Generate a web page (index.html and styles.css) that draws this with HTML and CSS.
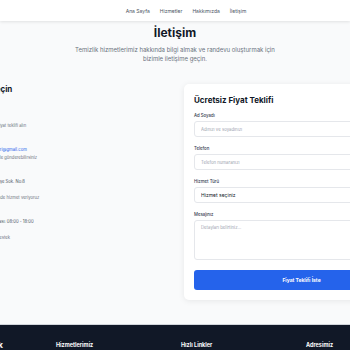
FILE: index.html
```html
<!DOCTYPE html>
<html lang="tr">
<head>
  <meta charset="UTF-8">
  <title>İletişim - Parlak Temizlik</title>
  <link rel="stylesheet" href="styles.css">
</head>
<body>
  <header class="site-header">
    <div class="wrap">
      <div class="header-inner">
        <a class="logo" href="#">Parlak Temizlik</a>
        <nav class="nav">
          <a href="#">Ana Sayfa</a>
          <a href="#">Hizmetler</a>
          <a href="#">Hakkımızda</a>
          <a href="#">İletişim</a>
        </nav>
        <a class="header-cta" href="#">Hemen Ara</a>
      </div>
    </div>
  </header>

  <section class="hero">
    <h1>İletişim</h1>
    <p>Temizlik hizmetlerimiz hakkında bilgi almak ve randevu oluşturmak için bizimle iletişime geçin.</p>
  </section>

  <section class="wrap">
    <div class="contact-grid">
      <div class="info">
        <h2>Şimdi İletişime Geçin</h2>

        <div class="info-item">
          <span class="info-icon"></span>
          <div>
            <h3>Telefon</h3>
            <p class="value">0532 123 45 67</p>
            <p class="desc">Hemen arayın, ücretsiz fiyat teklifi alın</p>
          </div>
        </div>

        <div class="info-item">
          <span class="info-icon"></span>
          <div>
            <h3>E-posta</h3>
            <p class="value link">parlakevtemizlikhizmetleri@gmail.com</p>
            <p class="desc">Taleplerinizi e-posta ile de gönderebilirsiniz</p>
          </div>
        </div>

        <div class="info-item">
          <span class="info-icon"></span>
          <div>
            <h3>Adres</h3>
            <p class="value">Atatürk Mahallesi Menekşe Sok. No:8</p>
            <p class="value">Kadıköy / İstanbul</p>
            <p class="desc">Tüm İstanbul ve çevresinde hizmet veriyoruz</p>
          </div>
        </div>

        <div class="info-item">
          <span class="info-icon"></span>
          <div>
            <h3>Çalışma Saatleri</h3>
            <p class="value">Pazartesi - Cumartesi arası: 08:00 - 18:00</p>
            <p class="value">Pazar: Kapalı</p>
            <p class="desc">Acil durumlar için 7/24 destek</p>
          </div>
        </div>
      </div>

      <form class="form-card">
        <h2>Ücretsiz Fiyat Teklifi</h2>

        <label>Ad Soyadı</label>
        <input type="text" placeholder="Adınızı ve soyadınızı">

        <label>Telefon</label>
        <input type="text" placeholder="Telefon numaranızı">

        <label>Hizmet Türü</label>
        <select>
          <option>Hizmet seçiniz</option>
        </select>

        <label>Mesajınız</label>
        <textarea placeholder="Detayları belirtiniz..."></textarea>

        <button type="button">Fiyat Teklifi İste</button>
      </form>
    </div>
  </section>

  <footer class="site-footer">
    <div class="wrap">
      <div class="footer-grid">
        <div class="footer-brand"><span class="brand-icon"></span>Parlak Temizlik</div>
        <h4>Hizmetlerimiz</h4>
        <h4>Hızlı Linkler</h4>
        <h4>Adresimiz</h4>
      </div>
    </div>
  </footer>
</body>
</html>
```

FILE: styles.css
```css
body {
  margin: 0;
  font-family: Inter, "Noto Sans", sans-serif;
  background-color: #f9fafb;
  color: #111827;
  overflow: hidden;
}
a {
  text-decoration: none;
  color: inherit;
}
p, h1, h2, h3, h4 {
  margin: 0;
}
.wrap {
  display: flex;
  justify-content: center;
}
.wrap > * {
  width: 488px;
  flex-shrink: 0;
}

/* header */
.site-header {
  background: #fff;
  height: 21px;
  box-shadow: 0 1px 3px rgba(0,0,0,0.1);
  position: relative;
}
.header-inner {
  display: grid;
  grid-template-columns: 1fr auto 1fr;
  align-items: center;
  height: 21px;
}
.logo {
  font-size: 8px;
  font-weight: 700;
}
.nav {
  display: flex;
  gap: 10px;
  padding-left: 22px;
  font-size: 5px;
  color: #4b5563;
}
.header-cta {
  justify-self: end;
  font-size: 5px;
}

/* hero */
.hero {
  text-align: center;
  padding-top: 4px;
}
.hero h1 {
  font-size: 12px;
  line-height: 16px;
}
.hero p {
  width: 212px;
  margin: 4px auto 0;
  font-size: 6px;
  line-height: 9px;
  color: #6b7280;
}

/* contact */
.contact-grid {
  display: grid;
  grid-template-columns: 1fr 1fr;
  gap: 18px;
  margin-top: 21px;
  padding-bottom: 24px;
}
.info h2 {
  font-size: 8px;
  line-height: 10px;
  margin-bottom: 12px;
}
.info-item {
  display: flex;
  gap: 6px;
  margin-bottom: 8px;
}
.info-icon {
  width: 14px;
  height: 14px;
  border-radius: 50%;
  background: #dbeafe;
  flex-shrink: 0;
}
.info h3 {
  font-size: 5px;
  line-height: 8px;
}
.info p {
  font-size: 4.2px;
  line-height: 8px;
}
.info .value {
  color: #4b5563;
}
.info .link {
  color: #2563eb;
}
.info .desc {
  color: #6b7280;
}

.form-card {
  background: #fff;
  border-radius: 5px;
  box-shadow: 0 1px 6px rgba(0,0,0,0.08);
  padding: 11px 10px 10px;
}
.form-card h2 {
  font-size: 8px;
  line-height: 10px;
  margin-bottom: 7px;
}
.form-card label {
  display: block;
  font-size: 4.3px;
  line-height: 8px;
  font-weight: 500;
  color: #374151;
  margin-bottom: 1px;
}
.form-card input,
.form-card select,
.form-card textarea {
  display: block;
  box-sizing: border-box;
  width: 100%;
  height: 16px;
  margin: 0 0 8px;
  padding: 0 6px;
  border: 1px solid #e5e7eb;
  border-radius: 3px;
  background: #fff;
  font-family: inherit;
  font-size: 4.3px;
  color: #111827;
}
.form-card select {
  appearance: none;
  font-size: 5px;
}
.form-card textarea {
  height: 40px;
  padding-top: 4px;
  resize: none;
  margin-bottom: 10px;
}
::placeholder {
  color: #9ca3af;
}
.form-card button {
  display: block;
  width: 100%;
  height: 20px;
  border: none;
  border-radius: 3px;
  background: #2563eb;
  color: #fff;
  font-family: inherit;
  font-size: 5px;
  font-weight: 700;
}

/* footer */
.site-footer {
  background: #111827;
  border-top: 1px solid #d1d5db;
  height: 60px;
}
.footer-grid {
  display: grid;
  grid-template-columns: repeat(4, 1fr);
  gap: 12px;
  padding-top: 15px;
  align-items: center;
}
.footer-brand {
  display: flex;
  align-items: center;
  gap: 3px;
  color: #fff;
  font-size: 8px;
  font-weight: 700;
}
.brand-icon {
  width: 10px;
  height: 10px;
  border-radius: 3px;
  background: #2563eb;
}
.footer-grid h4 {
  color: #fff;
  font-size: 5.5px;
  line-height: 8px;
}
```
